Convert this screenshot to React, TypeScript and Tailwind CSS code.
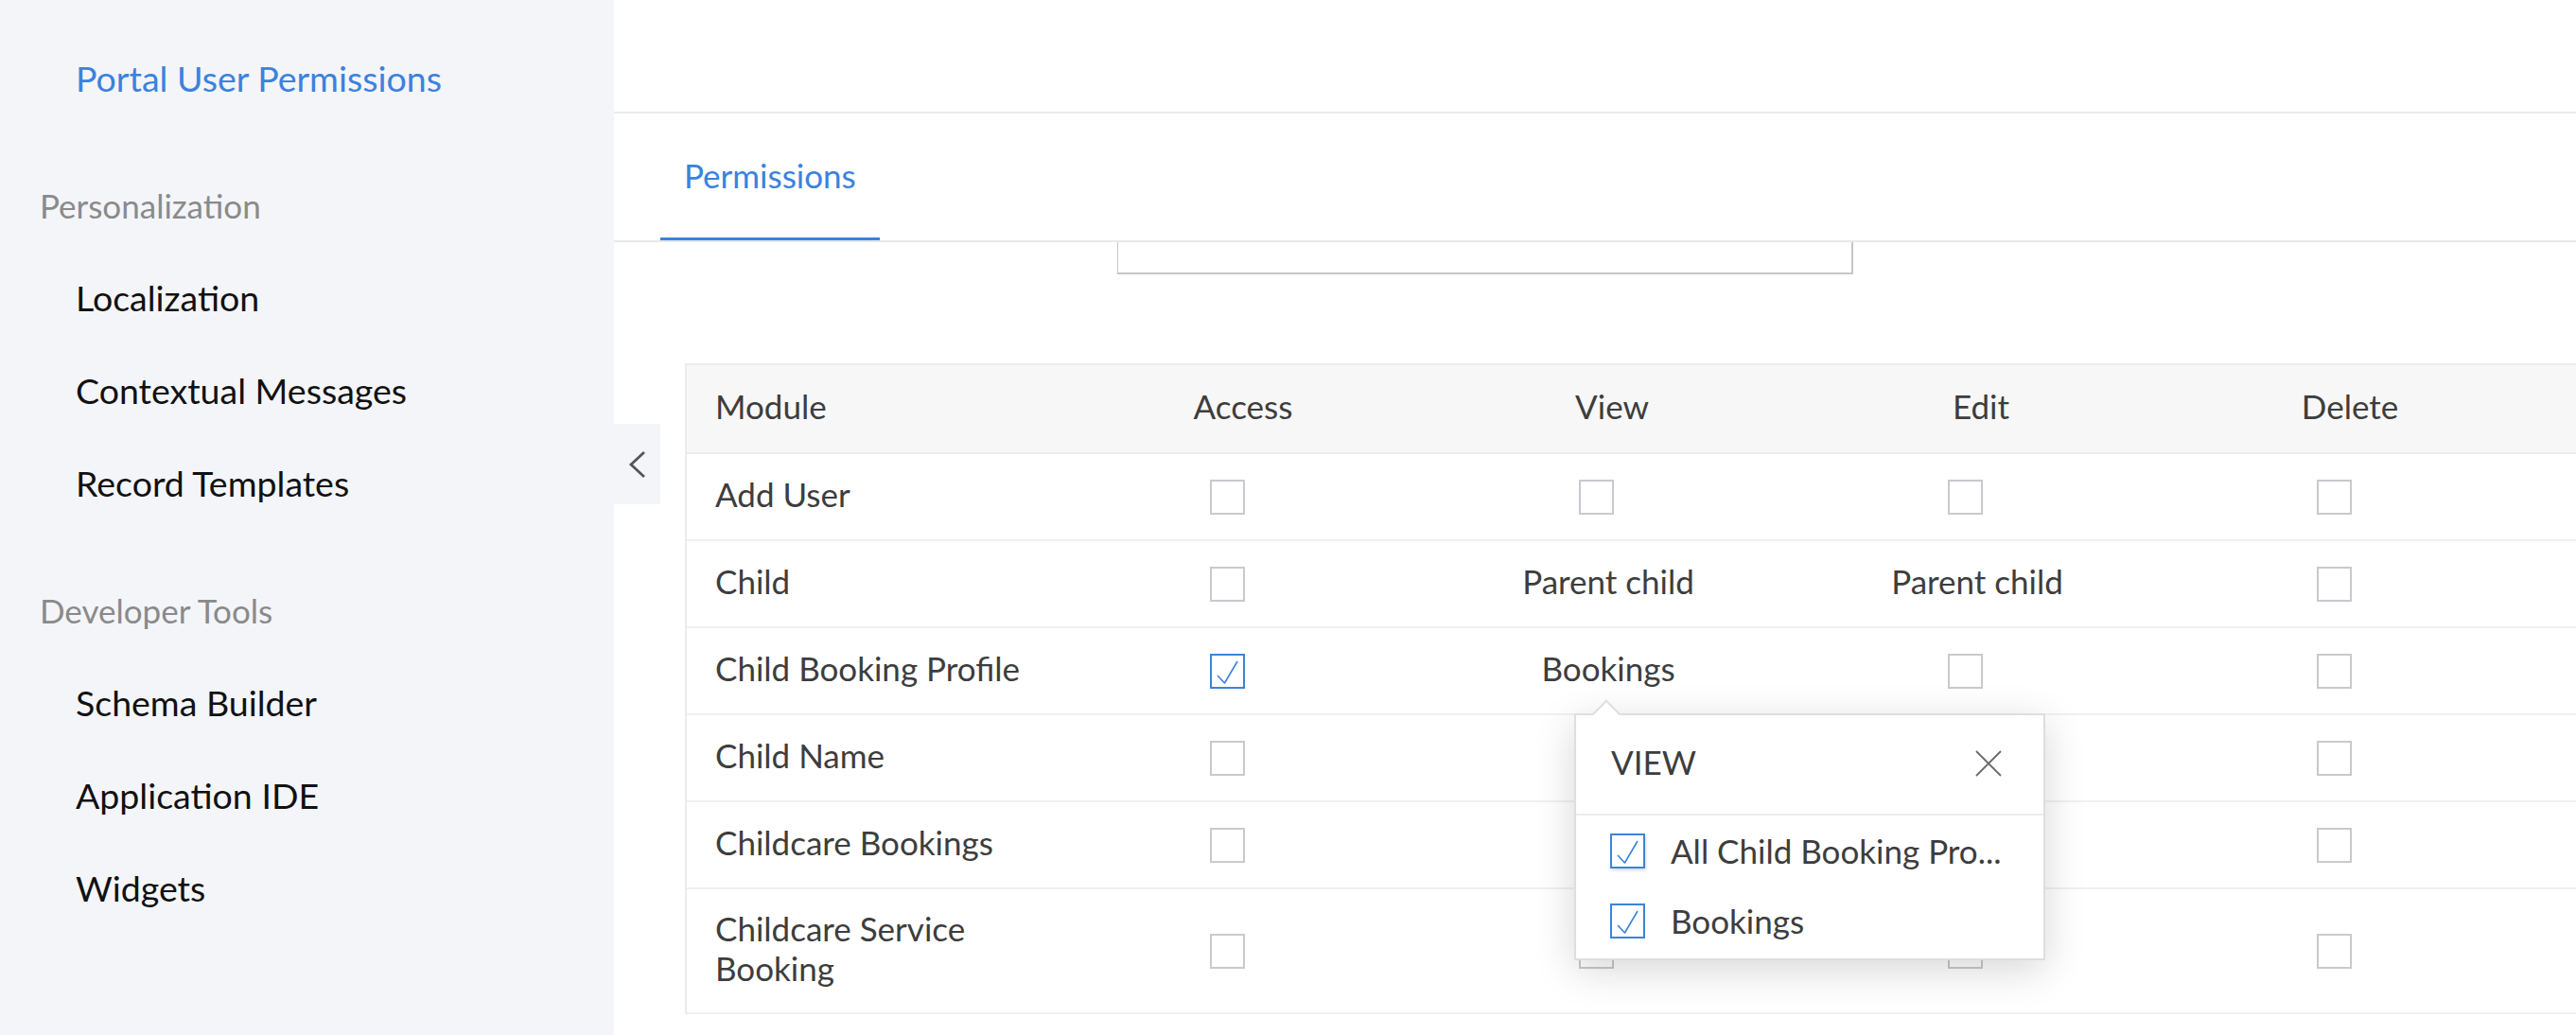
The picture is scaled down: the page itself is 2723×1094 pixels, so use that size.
import { ReactNode } from 'react';

const font = { fontFamily: 'Lato, "Open Sans", sans-serif' };

type Cell = 'box' | 'checked' | string;

const rows: { name: string; cells: Cell[]; tall?: boolean }[] = [
  { name: 'Add User', cells: ['box', 'box', 'box', 'box'] },
  { name: 'Child', cells: ['box', 'Parent child', 'Parent child', 'box'] },
  { name: 'Child Booking Profile', cells: ['checked', 'Bookings', 'box', 'box'] },
  { name: 'Child Name', cells: ['box', 'box', 'box', 'box'] },
  { name: 'Childcare Bookings', cells: ['box', 'box', 'box', 'box'] },
  { name: 'Childcare Service Booking', cells: ['box', 'box', 'box', 'box'], tall: true },
];

function CheckBox({ checked = false }: { checked?: boolean }) {
  if (!checked) {
    return <span className="block w-[37px] h-[37px] border-2 border-[#c9c9ce] bg-white" />;
  }
  return (
    <span className="block w-[37px] h-[37px] border-2 border-[#3a85d8] bg-white">
      <svg viewBox="0 0 33 33" className="w-full h-full">
        <polyline points="6,21 13.5,29 27,6" fill="none" stroke="#3a85d8" strokeWidth="1.6" strokeLinejoin="round" />
      </svg>
    </span>
  );
}

function SideItem({ children, active = false }: { children: ReactNode; active?: boolean }) {
  return (
    <div className={`h-[98px] flex items-center pl-[80px] text-[37.5px] ${active ? 'text-[#3b82dc]' : 'text-[#111]'}`}>
      {children}
    </div>
  );
}

function SideHeading({ children }: { children: ReactNode }) {
  return <div className="h-[98px] flex items-center pl-[42px] text-[35px] text-[#8a8a8a]">{children}</div>;
}

export default function App() {
  return (
    <div className="flex w-[2723px] h-[1094px] overflow-hidden bg-white" style={font}>
      {/* sidebar */}
      <aside className="w-[649px] shrink-0 bg-[#f4f5f9] pt-[34px]">
        <SideItem active>Portal User Permissions</SideItem>
        <div className="h-[36px]" />
        <SideHeading>Personalization</SideHeading>
        <SideItem>Localization</SideItem>
        <SideItem>Contextual Messages</SideItem>
        <SideItem>Record Templates</SideItem>
        <div className="h-[36px]" />
        <SideHeading>Developer Tools</SideHeading>
        <SideItem>Schema Builder</SideItem>
        <SideItem>Application IDE</SideItem>
        <SideItem>Widgets</SideItem>
      </aside>

      {/* main */}
      <main className="relative flex-1 overflow-hidden">
        <button className="absolute left-0 top-[448px] w-[49px] h-[85px] bg-[#f4f5f9] flex items-center justify-center">
          <svg width="20" height="30" viewBox="0 0 20 30">
            <polyline points="17,2 3,15 17,28" fill="none" stroke="#555" strokeWidth="2.8" />
          </svg>
        </button>

        <div className="h-[120px] border-b-2 border-[#e9eaec]" />

        <div className="h-[136px] border-b-2 border-[#e6e8eb] pl-[49px] flex">
          <div className="h-full px-[25px] flex items-center border-b-[3px] border-[#3b82dc] text-[35px] text-[#3b82dc]">
            Permissions
          </div>
        </div>

        <div className="ml-[532px] w-[778px] h-[34px] border-l border-r-2 border-b-2 border-[#c6c6c9]" />

        {/* table */}
        <div className="mt-[94px] ml-[75px] border-t-2 border-l-2 border-[#ececec] text-[35px] text-[#3d3d3d]">
          <div className="flex h-[94px] bg-[#f7f7f7] border-b-2 border-[#ececec] items-center pb-[6px]">
            <div className="w-[393px] pl-[30px]">Module</div>
            <div className="w-[390px] text-center">Access</div>
            <div className="w-[390px] text-center">View</div>
            <div className="w-[390px] text-center">Edit</div>
            <div className="w-[390px] text-center">Delete</div>
          </div>
          {rows.map((r) => (
            <div
              key={r.name}
              className={`flex items-center border-b-2 border-[#f0f0f0] leading-[42px] ${r.tall ? 'py-[23px]' : 'py-6'}`}
            >
              <div className="relative -top-[3px] w-[393px] pl-[30px] pr-[18px]">{r.name}</div>
              {r.cells.map((c, i) => (
                <div key={i} className="w-[390px] flex justify-center">
                  {c === 'box' || c === 'checked' ? (
                    <span className="mr-[34px]">
                      <CheckBox checked={c === 'checked'} />
                    </span>
                  ) : (
                    <span className="relative -top-[3px] pr-[8px]">{c}</span>
                  )}
                </div>
              ))}
            </div>
          ))}
        </div>

        {/* popover */}
        <div className="absolute left-[1015px] top-[754px] w-[498px] h-[261px] bg-white border-2 border-[#dedede] shadow-[0_10px_40px_rgba(0,0,0,0.16)] text-[#3d3d3d]">
          <span className="absolute -top-[12px] left-[21px] w-[22px] h-[22px] rotate-45 bg-white border-t-2 border-l-2 border-[#dedede]" />
          <div className="relative h-[106px] flex items-center justify-between pl-[37px] pr-[44px] pb-[6px] border-b-2 border-[#ececec]">
            <span className="text-[35px]">VIEW</span>
            <svg width="28" height="28" viewBox="0 0 28 28" className="mt-[4px]">
              <path d="M1 1 L27 27 M27 1 L1 27" stroke="#6b6b6b" strokeWidth="1.8" />
            </svg>
          </div>
          <div className="flex items-center h-[74px] pl-[36px] gap-[27px] text-[35px]">
            <span className="shadow-[1px_2px_3px_rgba(0,0,0,0.15)]">
              <CheckBox checked />
            </span>
            <span>All Child Booking Pro...</span>
          </div>
          <div className="flex items-center h-[74px] pl-[36px] gap-[27px] text-[35px]">
            <CheckBox checked />
            <span>Bookings</span>
          </div>
        </div>
      </main>
    </div>
  );
}
